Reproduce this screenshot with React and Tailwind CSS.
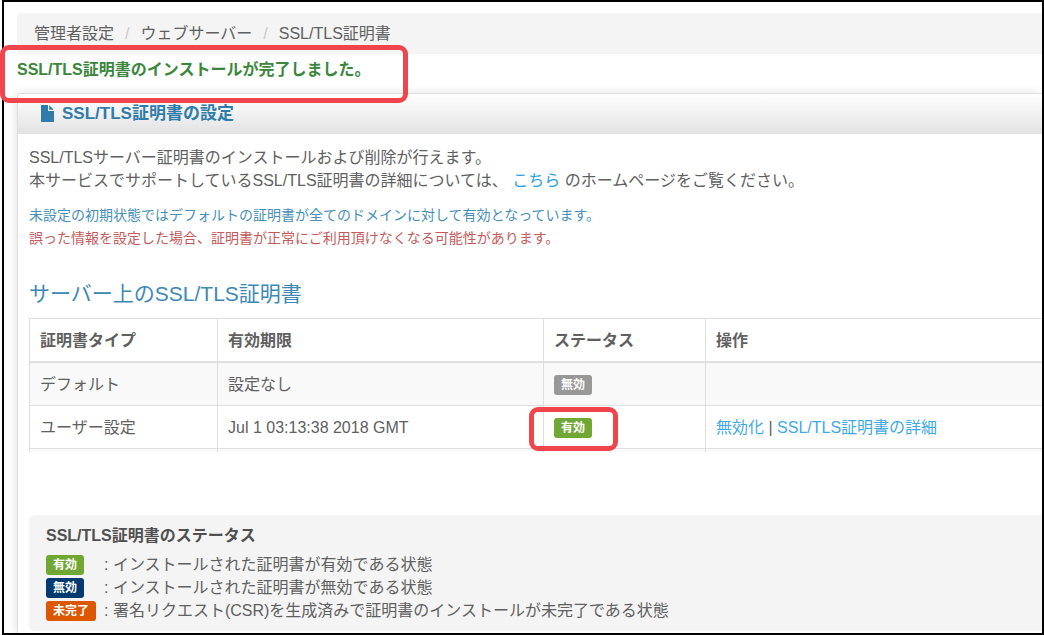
import React from 'react';

const badgeColors = {
    gray: 'bg-[#989898]',
    green: 'bg-[#71a834]',
    navy: 'bg-[#003a70]',
    orange: 'bg-[#dd5600]'
};

const Badge = ({ color, children }) => (
    <span className={`inline-block rounded-[3px] px-[7px] text-[12px] leading-[20px] font-bold text-white ${badgeColors[color]}`}>
        {children}
    </span>
);

const Highlight = ({ className }) => (
    <span
        aria-hidden="true"
        className={`pointer-events-none absolute z-10 rounded-[9px] border-[5px] border-[#f0454c] ${className}`}
    />
);

const FileIcon = () => (
    <svg viewBox="0 0 13 17" className="h-[17px] w-[13px]" fill="#2f7cab" aria-hidden="true">
        <path d="M0 0h7v6h6v11H0z" />
        <path d="M8.2 0.2v4.6h4.6z" />
    </svg>
);

const Breadcrumb = () => (
    <nav className="rounded-l bg-[#f4f4f4] py-[9px] pl-[17px]">
        <ol className="flex">
            <li>管理者設定</li>
            <li aria-hidden="true" className="px-[11px] text-[#c8c8c8]">/</li>
            <li>ウェブサーバー</li>
            <li aria-hidden="true" className="px-[11px] text-[#c8c8c8]">/</li>
            <li>SSL/TLS証明書</li>
        </ol>
    </nav>
);

const line = 'border-l border-t border-[#dfdfdf]';
const headCell = `${line} border-b px-[10px] pt-[10px] pb-[9px] text-left`;
const cell = `${line} px-[10px] pt-[10px] pb-[9px]`;

const CertificateTable = () => (
    <table className="w-full table-fixed border-separate border-spacing-0">
        <colgroup>
            <col className="w-[188px]" />
            <col className="w-[326px]" />
            <col className="w-[162px]" />
            <col />
        </colgroup>
        <thead>
            <tr>
                <th className={headCell}>証明書タイプ</th>
                <th className={headCell}>有効期限</th>
                <th className={headCell}>ステータス</th>
                <th className={headCell}>操作</th>
            </tr>
        </thead>
        <tbody>
            <tr className="bg-[#f9f9f9]">
                <td className={cell}>デフォルト</td>
                <td className={cell}>設定なし</td>
                <td className={cell}>
                    <div className="flex items-center">
                        <Badge color="gray">無効</Badge>
                    </div>
                </td>
                <td className={cell}></td>
            </tr>
            <tr>
                <td className={cell}>ユーザー設定</td>
                <td className={cell}>Jul 1 03:13:38 2018 GMT</td>
                <td className={cell}>
                    <div className="relative flex w-fit items-center">
                        <Badge color="green">有効</Badge>
                        <Highlight className="-top-[11px] -right-[26px] -bottom-[13px] -left-[25px]" />
                    </div>
                </td>
                <td className={cell}>
                    <a href="#disable" className="text-[#3fa9e6]">無効化</a>
                    {' | '}
                    <a href="#detail" className="text-[#3fa9e6]">SSL/TLS証明書の詳細</a>
                </td>
            </tr>
            <tr className="h-1 bg-[#f9f9f9]">
                <td className={line}></td>
                <td className={line}></td>
                <td className={line}></td>
                <td className={line}></td>
            </tr>
        </tbody>
    </table>
);

const legend = [
    { color: 'green', label: '有効', text: 'インストールされた証明書が有効である状態' },
    { color: 'navy', label: '無効', text: 'インストールされた証明書が無効である状態' },
    { color: 'orange', label: '未完了', text: '署名リクエスト(CSR)を生成済みで証明書のインストールが未完了である状態' }
];

const StatusLegend = () => (
    <section className="mt-[63px] rounded-l-md bg-[#f4f4f4] py-[9px] pl-[17px]">
        <h3 className="mb-[6px] font-bold text-[#505050]">SSL/TLS証明書のステータス</h3>
        <ul>
            {legend.map((item) => (
                <li key={item.color} className="flex items-center">
                    <span className="flex w-[58px] items-center">
                        <Badge color={item.color}>{item.label}</Badge>
                    </span>
                    <span>: {item.text}</span>
                </li>
            ))}
        </ul>
    </section>
);

export default function App() {
    return (
        <div className="min-h-screen bg-white pl-[2px] font-['Liberation_Sans','Noto_Sans_CJK_JP',sans-serif] text-[16px] leading-[23px] text-[#606060]">
            <main className="flex min-h-screen flex-col border-2 border-black pt-[11px] pl-[13px]">
                <Breadcrumb />

                <div className="pt-[4px] pb-[12px]">
                    <p role="status" className="relative w-fit font-bold text-[#3a863a]">
                        SSL/TLS証明書のインストールが完了しました。
                        <Highlight className="-top-[13px] -right-[38px] -bottom-[22px] -left-[17px]" />
                    </p>
                </div>

                <section className="flex-1 rounded-tl border-t border-l border-[#dedede] shadow-[-1px_0_10px_rgba(0,0,0,0.12)]">
                    <header className="flex items-center gap-2 rounded-tl border-b border-[#e2e2e2] bg-linear-to-b from-white to-[#e3e3e3] py-[8px] pl-[23px]">
                        <FileIcon />
                        <h1 className="text-[17px] font-bold text-[#2f7cab]">SSL/TLS証明書の設定</h1>
                    </header>

                    <div className="pt-[12px] pb-[2px] pl-[11px]">
                        <p>SSL/TLSサーバー証明書のインストールおよび削除が行えます。</p>
                        <p>
                            本サービスでサポートしているSSL/TLS証明書の詳細については、{' '}
                            <a href="#homepage" className="text-[#2a9fe8]">こちら</a>
                            {' '}のホームページをご覧ください。
                        </p>

                        <div className="mt-[12px] text-[14px]">
                            <p className="text-[#4790b8]">未設定の初期状態ではデフォルトの証明書が全てのドメインに対して有効となっています。</p>
                            <p className="text-[#c65a5a]">誤った情報を設定した場合、証明書が正常にご利用頂けなくなる可能性があります。</p>
                        </div>

                        <h2 className="mt-[29px] mb-[9px] text-[21px] leading-[30px] text-[#3d88b5]">サーバー上のSSL/TLS証明書</h2>
                        <CertificateTable />

                        <StatusLegend />
                    </div>
                </section>
            </main>
        </div>
    );
}
